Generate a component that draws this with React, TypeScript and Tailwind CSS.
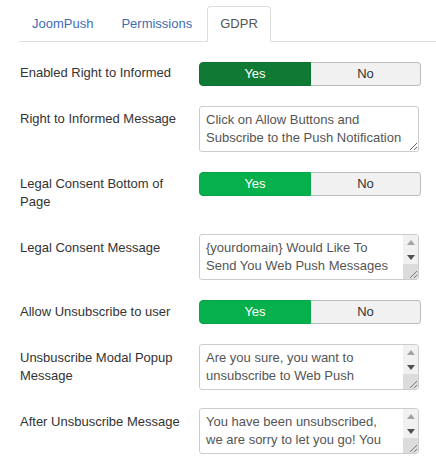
import React from "react";

function Toggle({ dark }: { dark?: boolean }) {
  return (
    <div className="flex h-[24px] w-[222px] shrink-0">
      <div
        className={
          "w-[112px] flex items-center justify-center rounded-l-[4px] border text-white " +
          (dark ? "bg-[#0f7a34] border-[#0d7030]" : "bg-[#06b04c] border-[#05a547]")
        }
      >
        Yes
      </div>
      <div className="flex-1 flex items-center justify-center rounded-r-[4px] border border-l-0 border-[#bcbcbc] bg-[#f1f1f1] text-[#333]">
        No
      </div>
    </div>
  );
}

function Area({ value }: { value: string }) {
  return (
    <textarea
      readOnly
      value={value}
      className="block w-[220px] h-[46px] shrink-0 rounded-[3px] border border-[#cccccc] bg-white px-[6px] py-[4px] text-[13px] leading-[18px] text-[#555] outline-none font-['Liberation_Sans',Arial,sans-serif]"
    />
  );
}

function ScrollArea({ value }: { value: string }) {
  return (
    <div className="flex w-[220px] h-[46px] shrink-0 rounded-[3px] border border-[#cccccc] bg-white overflow-hidden">
      <div className="flex-1 overflow-hidden px-[6px] py-[4px] text-[#555]">{value}</div>
      <div className="w-[15px] flex flex-col bg-[#f1f1f1]">
        <div className="h-[15px] flex items-center justify-center">
          <svg width="8" height="5" viewBox="0 0 8 5">
            <polygon points="0,5 8,5 4,0" fill="#a3a3a3" />
          </svg>
        </div>
        <div className="h-[14px] flex items-center justify-center">
          <svg width="8" height="5" viewBox="0 0 8 5">
            <polygon points="0,0 8,0 4,5" fill="#505050" />
          </svg>
        </div>
        <div className="flex-1 bg-[#dcdcdc] flex items-end justify-end">
          <svg width="10" height="10" viewBox="0 0 10 10">
            <line x1="2" y1="9" x2="9" y2="2" stroke="#7a7a7a" strokeWidth="1" />
            <line x1="6" y1="9" x2="9" y2="6" stroke="#7a7a7a" strokeWidth="1" />
          </svg>
        </div>
      </div>
    </div>
  );
}

export default function App() {
  return (
    <div className="w-[436px] h-[462px] overflow-hidden bg-white text-[13px] leading-[18px] text-[#333] font-['Liberation_Sans',Arial,sans-serif]">
      <div className="pt-[6px] pl-[19px]">
        <div className="flex border-b border-[#dddddd]">
          <div className="-mb-px mr-[2px] px-[12px] py-[8px] border border-transparent text-[#3f6db5]">
            JoomPush
          </div>
          <div className="-mb-px mr-[2px] px-[12px] py-[8px] border border-transparent text-[#3f6db5]">
            Permissions
          </div>
          <div className="-mb-px mr-[2px] px-[12px] py-[8px] border border-[#dddddd] border-b-white rounded-t-[4px] bg-white text-[#555]">
            GDPR
          </div>
        </div>
      </div>

      <div className="pl-[20px] flex flex-col">
        <div className="mt-[20px] flex">
          <div className="w-[179px] shrink-0 pt-[2px]">Enabled Right to Informed</div>
          <Toggle dark />
        </div>

        <div className="mt-[20px] flex">
          <div className="w-[179px] shrink-0 pt-[4px]">Right to Informed Message</div>
          <Area value="Click on Allow Buttons and Subscribe to the Push Notification" />
        </div>

        <div className="mt-[20px] flex min-h-[42px]">
          <div className="w-[179px] shrink-0 pt-[3px] pr-[20px]">Legal Consent Bottom of Page</div>
          <Toggle />
        </div>

        <div className="mt-[20px] flex">
          <div className="w-[179px] shrink-0 pt-[5px]">Legal Consent Message</div>
          <ScrollArea value="{yourdomain} Would Like To Send You Web Push Messages" />
        </div>

        <div className="mt-[20px] flex">
          <div className="w-[179px] shrink-0 pt-[3px]">Allow Unsubscribe to user</div>
          <Toggle />
        </div>

        <div className="mt-[20px] flex">
          <div className="w-[179px] shrink-0 pt-[5px] pr-[10px]">Unsbuscribe Modal Popup Message</div>
          <ScrollArea value="Are you sure, you want to unsubscribe to Web Push" />
        </div>

        <div className="mt-[18px] flex">
          <div className="w-[179px] shrink-0 pt-[5px]">After Unsbuscribe Message</div>
          <ScrollArea value="You have been unsubscribed, we are sorry to let you go! You" />
        </div>
      </div>
    </div>
  );
}
